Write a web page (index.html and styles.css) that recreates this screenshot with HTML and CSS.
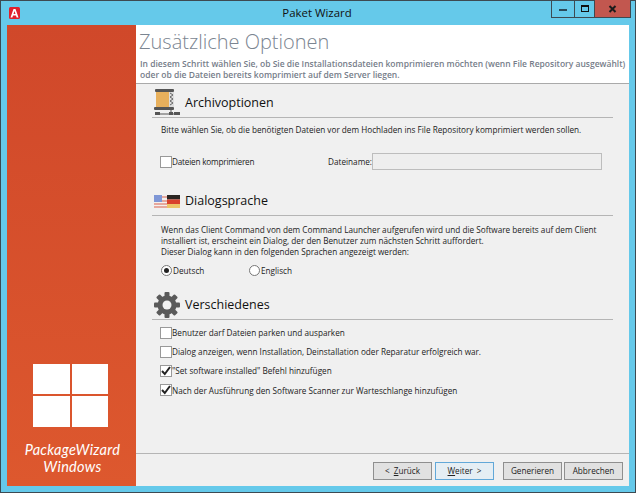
FILE: index.html
```html
<!DOCTYPE html>
<html lang="de">
<head>
  <meta charset="UTF-8" />
  <title>Paket Wizard</title>
  <link rel="stylesheet" href="styles.css">
</head>
<body>
  <div class="window">
    <div class="titlebar">
      <svg class="app-icon" width="11" height="12" viewBox="0 0 11 12"><rect width="11" height="12" rx="1.5" fill="#e0202c"/><path d="M1.5 10.5 4.5 2h2l3 8.5H7.6L7 8.6H4L3.4 10.5zM4.5 7h2L5.5 4z" fill="#fff" fill-rule="evenodd"/></svg>
      <span class="window-title">Paket Wizard</span>
      <div class="controls">
        <div class="ctl"><span class="ctl-min"></span></div>
        <div class="ctl ctl-mid"><span class="ctl-max"></span></div>
        <div class="ctl ctl-close">
          <svg width="9" height="8" viewBox="0 0 9 8"><path d="M1.5 1 7.5 7M7.5 1 1.5 7" stroke="#1c1c1c" stroke-width="2"/></svg>
        </div>
      </div>
    </div>

    <div class="client">
      <aside class="side">
        <div class="tiles"><i></i><i></i><i></i><i></i></div>
        <div class="side-name">PackageWizard<br>Windows</div>
      </aside>

      <main class="main">
        <header class="head">
          <h1>Zusätzliche Optionen</h1>
          <p>In diesem Schritt wählen Sie, ob Sie die Installationsdateien komprimieren möchten (wenn File Repository ausgewählt)<br>oder ob die Dateien bereits komprimiert auf dem Server liegen.</p>
        </header>

        <div class="content">
          <section class="group group-archive">
            <div class="group-head">
              <svg class="group-icon" width="26" height="27" viewBox="0 0 26 27">
                <rect x="1" y="0" width="19" height="3" rx="1" fill="#555"/>
                <rect x="2" y="3" width="13" height="15" fill="#e8b05c"/>
                <rect x="15" y="3" width="5" height="15" fill="#ddd"/>
                <path d="M16 4 19 6 16 8 19 10 16 12 19 14 16 16" stroke="#666" fill="none"/>
                <rect x="0" y="18" width="20" height="3" rx="1" fill="#555"/>
                <path d="M17 21V25M4 25H24" stroke="#555"/>
                <rect x="1" y="23" width="5" height="3" fill="#555"/><rect x="15" y="23" width="4" height="3" fill="#555"/><rect x="20" y="23" width="6" height="3" fill="#555"/>
              </svg>
              <h2>Archivoptionen</h2>
            </div>
            <p class="text">Bitte wählen Sie, ob die benötigten Dateien vor dem Hochladen ins File Repository komprimiert werden sollen.</p>
            <div class="file-row">
              <label class="check file-check"><span class="box"></span>Dateien komprimieren</label>
              <label class="file-label">Dateiname:</label>
              <div class="file-input"></div>
            </div>
          </section>

          <section class="group group-lang">
            <div class="group-head">
              <svg class="group-icon" width="26" height="13" viewBox="0 0 26 13">
                <rect width="14" height="13" fill="#f4f0ee"/>
                <path d="M0 2H14M0 6H14M0 9H14M0 12H14" stroke="#d9604c"/>
                <rect width="8" height="7" fill="#7f97d6"/>
                <rect x="13" width="13" height="4.5" fill="#2a2522"/>
                <rect x="13" y="4.5" width="13" height="4.5" fill="#d9402c"/>
                <rect x="13" y="9" width="13" height="4" fill="#edc468"/>
              </svg>
              <h2>Dialogsprache</h2>
            </div>
            <p class="text">Wenn das Client Command von dem Command Launcher aufgerufen wird und die Software bereits auf dem Client<br>installiert ist, erscheint ein Dialog, der den Benutzer zum nächsten Schritt auffordert.<br>Dieser Dialog kann in den folgenden Sprachen angezeigt werden:</p>
            <div class="radio-row">
              <label class="radio-item"><span class="radio on"></span>Deutsch</label>
              <label class="radio-item"><span class="radio"></span>Englisch</label>
            </div>
          </section>

          <section class="group group-misc">
            <div class="group-head">
              <svg class="group-icon" width="26" height="26" viewBox="0 0 26 26">
                <g fill="#5a5a5a">
                  <circle cx="13" cy="13" r="9.5"/>
                  <rect x="10.5" y="0" width="5" height="26" rx="1"/>
                  <rect x="10.5" y="0" width="5" height="26" rx="1" transform="rotate(45 13 13)"/>
                  <rect x="10.5" y="0" width="5" height="26" rx="1" transform="rotate(90 13 13)"/>
                  <rect x="10.5" y="0" width="5" height="26" rx="1" transform="rotate(135 13 13)"/>
                </g>
                <circle cx="13" cy="13" r="4.5" fill="#f0f0f0"/>
              </svg>
              <h2>Verschiedenes</h2>
            </div>
            <div class="check-list">
              <label class="check"><span class="box"></span>Benutzer darf Dateien parken und ausparken</label>
              <label class="check"><span class="box"></span>Dialog anzeigen, wenn Installation, Deinstallation oder Reparatur erfolgreich war.</label>
              <label class="check"><span class="box"><svg width="10" height="10" viewBox="0 0 10 10"><path d="M1 5 3.8 8 9 1" stroke="#222" stroke-width="2" fill="none"/></svg></span>"Set software installed" Befehl hinzufügen</label>
              <label class="check"><span class="box"><svg width="10" height="10" viewBox="0 0 10 10"><path d="M1 5 3.8 8 9 1" stroke="#222" stroke-width="2" fill="none"/></svg></span>Nach der Ausführung den Software Scanner zur Warteschlange hinzufügen</label>
            </div>
          </section>
        </div>

        <footer class="foot">
          <button class="btn btn-back">&lt; <u>Z</u>urück</button>
          <button class="btn btn-default"><u>W</u>eiter &gt;</button>
          <button class="btn">Generieren</button>
          <button class="btn">Abbrechen</button>
        </footer>
      </main>
    </div>
  </div>
</body>
</html>
```
FILE: styles.css
```css
html, body { margin: 0; height: 100%; overflow: hidden; }
body { font-family: "Open Sans", "Noto Sans", sans-serif; font-size: 8.2px; color: #222; }

.window { width: 636px; height: 493px; box-sizing: border-box; background: #65c9ea; border: 1px solid #3d4a52; display: flex; flex-direction: column; }

.titlebar { height: 24px; position: relative; display: flex; align-items: center; justify-content: center; flex: none; }
.app-icon { position: absolute; left: 8px; top: 6px; }
.window-title { font-size: 11.4px; color: #111; margin: -1px 2px 0 0; }
.controls { position: absolute; right: 4px; top: -1px; display: flex; height: 17px; border: 1px solid #3d4a52; border-top: 0; }
.ctl { width: 22px; display: flex; align-items: center; justify-content: center; border-right: 1px solid #3d4a52; }
.ctl-mid { width: 19px; }
.ctl-close { width: 35px; background: #c2574f; border-right: 0; }
.ctl-min { width: 8px; height: 2px; background: #2a4a5a; margin-top: 3px; }
.ctl-max { width: 6px; height: 4px; border: 1px solid #111; border-top-width: 2px; }

.client { flex: none; height: 461px; margin: 0 6px; display: flex; }

.side { width: 129px; flex: none; background: linear-gradient(#d0482a, #dd582e); display: flex; flex-direction: column; align-items: center; justify-content: flex-end; box-sizing: border-box; padding-bottom: 11px; }
.tiles { display: grid; grid-template-columns: 37px 36px; grid-template-rows: 30px 31px; gap: 2px; margin: 0 2px 14px 0; }
.tiles i { background: #fff; }
.side-name { font-family: Lato, "Open Sans", sans-serif; font-style: italic; font-size: 14.5px; line-height: 17px; color: #fff; text-align: center; letter-spacing: .3px; margin-left: 2px; }

.main { flex: 1; display: flex; flex-direction: column; min-width: 0; background: #f0f0f0; }

.head { height: 59px; box-sizing: border-box; background: #fff; border-bottom: 1px solid #aaa; padding: 1px 0 0 4px; flex: none; }
.head h1 { margin: 0 0 0 -1px; font-size: 20px; font-weight: 300; line-height: 32px; color: #7b8591; }
.head p { margin: 0; font-size: 8.5px; line-height: 11px; color: #767d89; font-weight: 600; white-space: nowrap; }

.content { flex: 1; padding: 0 16px; }
.group-head { display: flex; align-items: flex-end; box-sizing: border-box; height: 34px; padding: 0 0 6px 33px; border-bottom: 1px solid #b5b5b5; position: relative; }
.group-icon { position: absolute; left: 2px; bottom: 1px; }
.group-head h2 { margin: 0; font-size: 12.5px; line-height: 17px; font-weight: 400; color: #111; }

.group-lang { margin-top: 16px; }
.group-misc { margin-top: 14px; }
.group-lang .group-head, .group-misc .group-head { height: 30px; }
.group-lang .group-icon { bottom: 7px; }

.text { margin: 6px 0 0 9px; line-height: 11px; white-space: nowrap; }
.group-lang .text { margin-top: 8px; }

.file-row { display: flex; align-items: center; margin: 18px 0 0 8px; height: 17px; }
.file-check { width: 168px; height: auto; letter-spacing: -.2px; }
.file-label { width: 44px; }
.file-input { width: 228px; height: 15px; background: #eee; border: 1px solid #bdbdbd; }

.check { display: flex; align-items: center; height: 19.2px; white-space: nowrap; }
.box { width: 10px; height: 10px; background: #fff; border: 1px solid #999; flex: none; display: flex; align-items: center; justify-content: center; }
.check-list { margin: 3px 0 0 8px; }

.radio-row { display: flex; margin: 7px 0 0 9px; height: 12px; }
.radio-item { display: flex; align-items: center; width: 88px; }
.radio { width: 9px; height: 9px; border: 1px solid #777; border-radius: 50%; background: #fff; margin-right: 1px; position: relative; }
.radio.on::after { content: ""; position: absolute; left: 2px; top: 2px; width: 5px; height: 5px; border-radius: 50%; background: #222; }

.foot { height: 33px; flex: none; box-sizing: border-box; border-top: 1px solid #b5b5b5; display: flex; align-items: center; justify-content: flex-end; padding: 1px 6px 0 0; gap: 2px; }
.btn { width: 59px; height: 18px; padding: 0; font: inherit; color: #222; word-spacing: 2px; background: #e1e1e1; border: 1px solid #8f8f8f; }
.btn-back { margin-right: 1px; }
.btn-default { border-color: #62a8d8; background: #e5eef4; margin-right: 7px; }
```
